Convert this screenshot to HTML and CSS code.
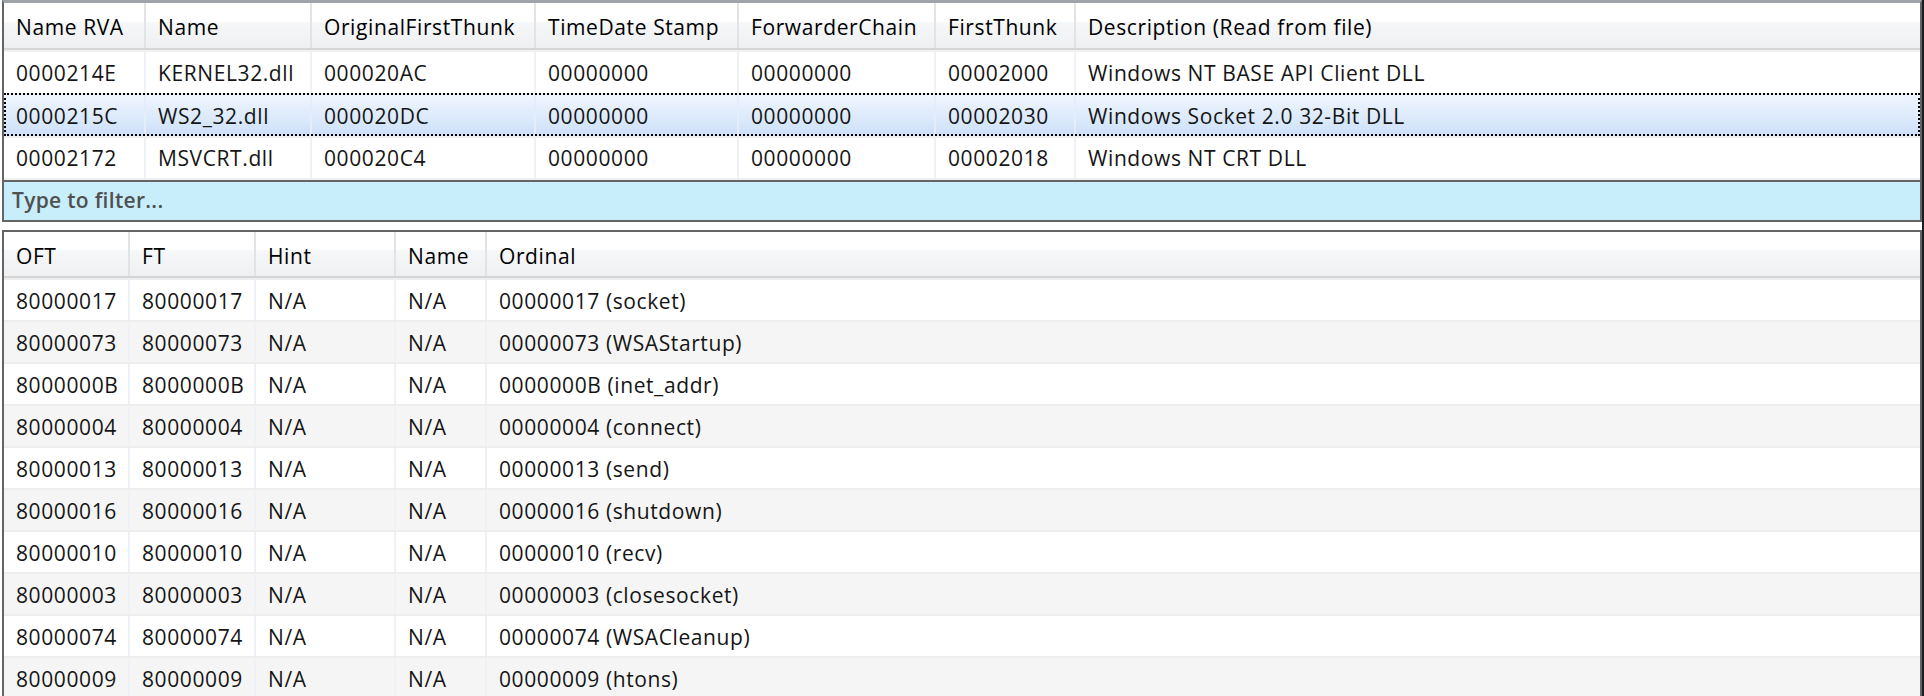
FILE: index.html
```html
<!DOCTYPE html>
<html>
<head>
<meta charset="utf-8">
<link rel="stylesheet" href="styles.css">
</head>
<body>
<div class="window">
  <div class="panel imports">
    <div class="head cols-imports">
      <div class="cell">Name RVA</div>
      <div class="cell">Name</div>
      <div class="cell">OriginalFirstThunk</div>
      <div class="cell">TimeDate Stamp</div>
      <div class="cell">ForwarderChain</div>
      <div class="cell">FirstThunk</div>
      <div class="cell">Description (Read from file)</div>
    </div>
    <div class="row cols-imports">
      <div class="cell">0000214E</div>
      <div class="cell">KERNEL32.dll</div>
      <div class="cell">000020AC</div>
      <div class="cell">00000000</div>
      <div class="cell">00000000</div>
      <div class="cell">00002000</div>
      <div class="cell">Windows NT BASE API Client DLL</div>
    </div>
    <div class="row cols-imports sel">
      <div class="cell">0000215C</div>
      <div class="cell">WS2_32.dll</div>
      <div class="cell">000020DC</div>
      <div class="cell">00000000</div>
      <div class="cell">00000000</div>
      <div class="cell">00002030</div>
      <div class="cell">Windows Socket 2.0 32-Bit DLL</div>
    </div>
    <div class="row cols-imports">
      <div class="cell">00002172</div>
      <div class="cell">MSVCRT.dll</div>
      <div class="cell">000020C4</div>
      <div class="cell">00000000</div>
      <div class="cell">00000000</div>
      <div class="cell">00002018</div>
      <div class="cell">Windows NT CRT DLL</div>
    </div>
  </div>
  <div class="filter">Type to filter...</div>
  <div class="panel thunks">
    <div class="head cols-thunks">
      <div class="cell">OFT</div>
      <div class="cell">FT</div>
      <div class="cell">Hint</div>
      <div class="cell">Name</div>
      <div class="cell">Ordinal</div>
    </div>
    <div class="row cols-thunks"><div class="cell">80000017</div><div class="cell">80000017</div><div class="cell">N/A</div><div class="cell">N/A</div><div class="cell">00000017 (socket)</div></div>
    <div class="row cols-thunks"><div class="cell">80000073</div><div class="cell">80000073</div><div class="cell">N/A</div><div class="cell">N/A</div><div class="cell">00000073 (WSAStartup)</div></div>
    <div class="row cols-thunks"><div class="cell">8000000B</div><div class="cell">8000000B</div><div class="cell">N/A</div><div class="cell">N/A</div><div class="cell">0000000B (inet_addr)</div></div>
    <div class="row cols-thunks"><div class="cell">80000004</div><div class="cell">80000004</div><div class="cell">N/A</div><div class="cell">N/A</div><div class="cell">00000004 (connect)</div></div>
    <div class="row cols-thunks"><div class="cell">80000013</div><div class="cell">80000013</div><div class="cell">N/A</div><div class="cell">N/A</div><div class="cell">00000013 (send)</div></div>
    <div class="row cols-thunks"><div class="cell">80000016</div><div class="cell">80000016</div><div class="cell">N/A</div><div class="cell">N/A</div><div class="cell">00000016 (shutdown)</div></div>
    <div class="row cols-thunks"><div class="cell">80000010</div><div class="cell">80000010</div><div class="cell">N/A</div><div class="cell">N/A</div><div class="cell">00000010 (recv)</div></div>
    <div class="row cols-thunks"><div class="cell">80000003</div><div class="cell">80000003</div><div class="cell">N/A</div><div class="cell">N/A</div><div class="cell">00000003 (closesocket)</div></div>
    <div class="row cols-thunks"><div class="cell">80000074</div><div class="cell">80000074</div><div class="cell">N/A</div><div class="cell">N/A</div><div class="cell">00000074 (WSACleanup)</div></div>
    <div class="row cols-thunks"><div class="cell">80000009</div><div class="cell">80000009</div><div class="cell">N/A</div><div class="cell">N/A</div><div class="cell">00000009 (htons)</div></div>
  </div>
</div>
</body>
</html>
```

FILE: styles.css
```css
* { box-sizing: border-box; }
html, body { margin: 0; padding: 0; }
body {
  width: 1924px;
  height: 696px;
  overflow: hidden;
  background: #ffffff;
  font-family: "Open Sans", "Noto Sans", sans-serif;
  font-size: 21px;
  letter-spacing: 0.6px;
  color: #151515;
}
.window {
  height: 696px;
  padding-left: 2px;
  border-right: 2px solid #1c1d20;
  display: flex;
  flex-direction: column;
  overflow: hidden;
}
.panel {
  border-left: 2px solid #646464;
  border-right: 2px solid #646464;
  flex: none;
}
.imports {
  border-top: 3px solid #9fa3aa;
}
.thunks {
  margin-top: 8px;
  border-top: 2px solid #646464;
  flex: 1;
}
.cols-imports {
  display: grid;
  grid-template-columns: 142px 166px 224px 203px 197px 140px 1fr;
}
.cols-thunks {
  display: grid;
  grid-template-columns: 126px 126px 140px 91px 1fr;
}
.head {
  border-bottom: 2px solid #d5d5d5;
  background: linear-gradient(to bottom, #ffffff 0, #ffffff 42%, #f6f7f8 42%, #eff0f2 100%);
}
.imports .head { height: 47px; }
.thunks .head { height: 46px; }
.cell {
  display: flex;
  align-items: center;
  padding-left: 12px;
  white-space: nowrap;
  overflow: hidden;
}
.head .cell {
  border-right: 2px solid #e2e3e5;
  padding-top: 3px;
  color: #000;
}
.row {
  height: 42px;
  border-top: 2px solid #f0f0f0;
}
.imports .row {
  height: 43px;
}
.imports .row:last-child {
  height: 44px;
  border-bottom: 2px solid #f0f0f0;
}
.row .cell {
  border-right: 2px solid #eef1f6;
}
.thunks .row .cell {
  padding-top: 2px;
}
.head .cell:last-child,
.row .cell:last-child {
  border-right: none;
}
.row.sel {
  background: linear-gradient(to bottom, #f0f6fe, #cce0f9);
  outline: 2px dotted #000;
  outline-offset: -2px;
}
.row.sel .cell {
  border-right-color: #e4edf9;
}
.thunks .row {
  border-top-color: #ededed;
}
.thunks .row:nth-child(odd) {
  background: #f5f5f5;
}
.filter {
  flex: none;
  height: 42px;
  border: 2px solid #646464;
  background: #c8eefc;
  color: #505050;
  font-weight: 600;
  letter-spacing: 0.3px;
  padding-left: 8px;
  padding-bottom: 3px;
  display: flex;
  align-items: center;
}
```
